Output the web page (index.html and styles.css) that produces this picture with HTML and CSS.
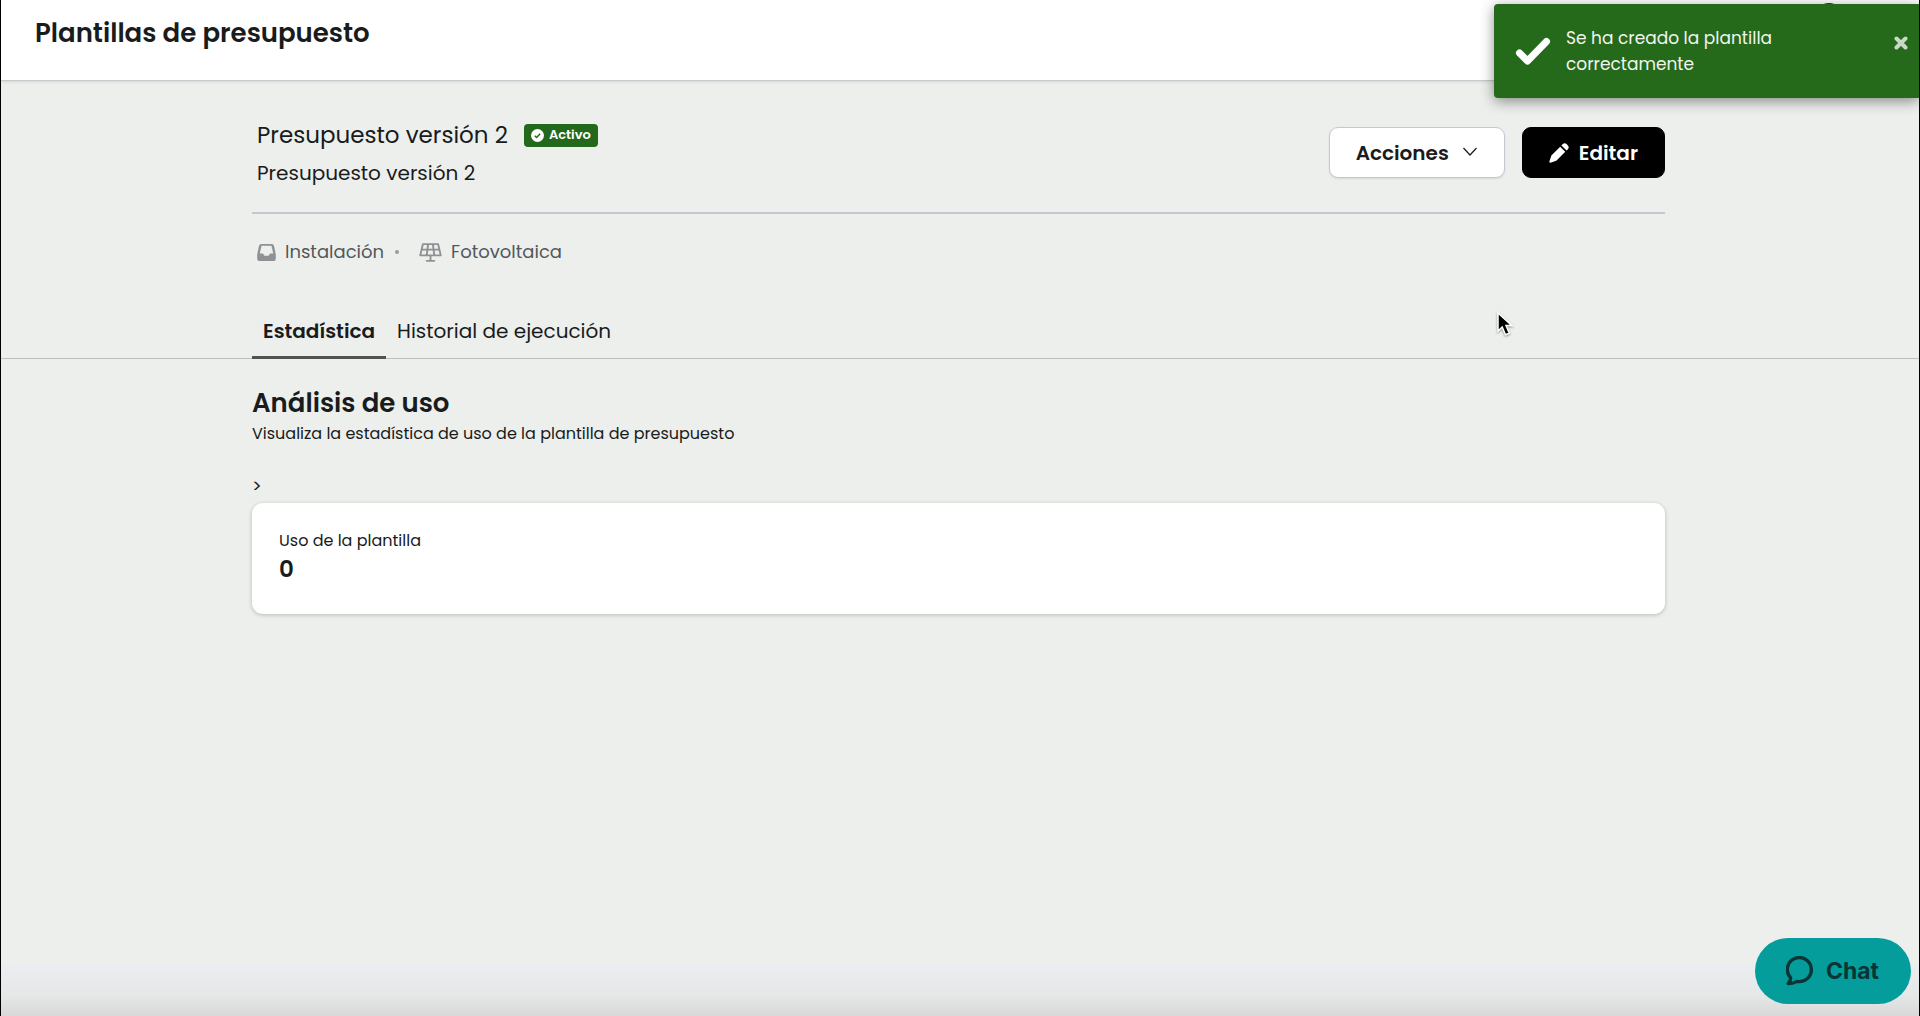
FILE: index.html
```html
<!DOCTYPE html>
<html lang="es">
<head>
<meta charset="utf-8">
<meta name="viewport" content="width=device-width, initial-scale=1">
<title>Plantillas de presupuesto</title>
<link rel="stylesheet" href="styles.css">
</head>
<body>
<div class="app">
  <header class="topbar">
    <h1 class="topbar-title">Plantillas de presupuesto</h1>
    <span class="avatar" aria-hidden="true"></span>
  </header>

  <main class="content">
    <div class="container">
      <section class="summary">
        <div class="summary-text">
          <div class="name-row">
            <h2 class="name">Presupuesto versión 2</h2>
            <span class="badge">
              <svg class="badge-icon" viewBox="0 0 16 16" aria-hidden="true"><circle cx="8" cy="8" r="8" fill="#fff"/><path d="M4.600 8.300l2.300 2.200 4.400-4.700" fill="none" stroke="#23681b" stroke-width="1.800"/></svg>
              Activo
            </span>
          </div>
          <p class="description">Presupuesto versión 2</p>
        </div>
        <div class="actions">
          <button class="button button-light" type="button">Acciones
            <svg class="chevron" viewBox="0 0 16 16" aria-hidden="true"><path d="M1.500 3L8 10l6.500-7" fill="none" stroke="currentColor" stroke-width="1.200"/></svg>
          </button>
          <button class="button button-dark" type="button">
            <svg class="pencil" viewBox="0 0 22 22" aria-hidden="true"><path d="M12.300 4.100l5.600 5.600L8 19.600l-6.400 2c-.8.200-1.400-.4-1.200-1.200l2.200-6.600zM13.700 2.700l1.500-1.500c1.200-1.200 2.900-1.200 4.100 0l1.500 1.500c1.200 1.200 1.200 2.900 0 4.100l-1.500 1.500z" fill="currentColor"/></svg>
            Editar
          </button>
        </div>
      </section>

      <ul class="meta">
        <li class="meta-item">
          <svg class="meta-icon" viewBox="0 0 20 20" aria-hidden="true"><path fill-rule="evenodd" d="M4.500 1h11a2.500 2.500 0 0 1 2.400 2l1.900 9v4a3 3 0 0 1-3 3H3.200a3 3 0 0 1-3-3v-4l1.900-9a2.500 2.500 0 0 1 2.400-2zm.3 2L2.900 11h3.300l1.700 2.500h4.200l1.700-2.500h3.300L15.200 3z" fill="currentColor"/></svg>
          Instalación
        </li>
        <li class="meta-item meta-item-next">
          <svg class="meta-icon-wide" viewBox="0 0 24 20" aria-hidden="true"><path d="M4 1.200h16L22.800 13H1.200zM2.500 7h19M9.500 1.200L8 13M14.500 1.200L16 13M12 13v5M8 18.800h8" fill="none" stroke="currentColor" stroke-width="2" stroke-linejoin="round" stroke-linecap="round"/></svg>
          Fotovoltaica
        </li>
      </ul>
    </div>

    <nav class="tabs">
      <div class="container tab-list">
        <a class="tab tab-active" href="#estadistica" aria-current="page">Estadística</a>
        <a class="tab" href="#historial">Historial de ejecución</a>
      </div>
    </nav>

    <section class="container usage" id="estadistica">
      <h2 class="usage-title">Análisis de uso</h2>
      <p class="usage-note">Visualiza la estadística de uso de la plantilla de presupuesto</p>
      <p class="marker">&gt;</p>
      <dl class="card">
        <dt class="card-label">Uso de la plantilla</dt>
        <dd class="card-value">0</dd>
      </dl>
    </section>
  </main>

  <div class="fade"></div>

  <div class="toast" role="status">
    <svg class="toast-icon" viewBox="0 0 36 28" aria-hidden="true"><path d="M4.500 16l8 8L31.500 4.500" fill="none" stroke="#fff" stroke-width="7" stroke-linecap="round" stroke-linejoin="round"/></svg>
    <p class="toast-text">Se ha creado la plantilla correctamente</p>
    <button class="toast-close" type="button" aria-label="Cerrar">
      <svg class="close-icon" viewBox="0 0 14 14" aria-hidden="true"><path d="M2.500 2.500l9 9M11.500 2.500l-9 9" stroke="#c8dac6" stroke-width="4" stroke-linecap="round"/></svg>
    </button>
  </div>

  <button class="chat" type="button">
    <svg class="chat-icon" viewBox="0 0 28 30" aria-hidden="true"><path d="M2.200 27.500c2-2 2.500-4 2.400-5.600A12 12 0 1 1 11 25.400c-2.500 1.500-5.500 2.300-8.800 2.100z" fill="none" stroke="currentColor" stroke-width="3.400" stroke-linejoin="round"/></svg>
    Chat
  </button>

  <svg class="pointer" viewBox="0 0 18 26" aria-hidden="true"><path d="M2 2v18l4.200-4 3.300 7.800 3.800-1.600-3.300-7.600h6z" fill="#000" stroke="#fff" stroke-width="1.500"/></svg>
</div>
</body>
</html>
```
FILE: styles.css
```css
* {
  box-sizing: border-box;
}

body {
  margin: 0;
  background: #ecefec;
  color: #191b1c;
  font-family: Poppins, Inter, sans-serif;
  font-size: 20px;
  line-height: 30px;
}

h1, h2, p, ul, dl, dd {
  margin: 0;
  padding: 0;
}

button {
  font: inherit;
  cursor: pointer;
}

.app {
  position: relative;
  min-height: 100vh;
  border: solid #000;
  border-width: 0 1px;
}

.topbar {
  display: flex;
  justify-content: space-between;
  align-items: flex-start;
  height: 81px;
  padding: 3px 76px 0 34px;
  background: #fff;
  border-bottom: 1px solid #c6c8cb;
  box-shadow: 0 1px 3px #0000001a;
}

.topbar-title {
  padding-top: 12px;
  font-size: 26px;
  line-height: 36px;
  font-weight: 600;
}

.avatar {
  width: 28px;
  height: 28px;
  border-radius: 50%;
  background: #333;
}

.container {
  --gutter: max(16px, calc((100% - 1416px) / 2));
  padding: 0 calc(var(--gutter) + 3px) 0 var(--gutter);
}

.summary {
  display: flex;
  justify-content: space-between;
  align-items: flex-start;
  padding: 36px 0 24px;
  border-bottom: 2px solid #c5c8d2;
}

.summary-text {
  padding-left: 5px;
}

.name-row {
  display: flex;
  align-items: center;
  gap: 16px;
}

.name {
  font-size: 23px;
  line-height: 36px;
  font-weight: 400;
}

.badge {
  display: flex;
  align-items: center;
  gap: 5px;
  height: 23px;
  padding: 0 7px;
  border-radius: 4px;
  background: #23681b;
  color: #fff;
  font-size: 13px;
  line-height: 20px;
  font-weight: 600;
}

.badge-icon {
  width: 13px;
  height: 13px;
}

.description {
  padding-top: 5px;
}

.actions {
  display: flex;
  gap: 17px;
  padding-top: 10px;
}

.button {
  display: flex;
  align-items: center;
  height: 51px;
  padding: 0 26px;
  border: 1px solid #c5c8d2;
  border-radius: 9px;
  font-weight: 600;
}

.button-light {
  gap: 13px;
  background: #fff;
  color: #191b1c;
  box-shadow: 0 1px 2px #0000001a;
}

.button-dark {
  gap: 10px;
  border-color: #000;
  background: #000;
  color: #fff;
}

.chevron {
  width: 16px;
  height: 16px;
}

.pencil {
  width: 20px;
  height: 20px;
}

.meta {
  display: flex;
  gap: 11px;
  padding: 23px 5px 0;
  color: #54575b;
  font-size: 18px;
  list-style: none;
}

.meta-item {
  display: flex;
  align-items: center;
  gap: 9px;
}

.meta-item-next::before {
  content: "";
  width: 4px;
  height: 4px;
  margin-right: 11px;
  border-radius: 50%;
  background: #999ba0;
}

.meta-icon {
  width: 19px;
  height: 19px;
  color: #8f9195;
}

.meta-icon-wide {
  width: 23px;
  height: 19px;
  color: #8f9195;
}

.tabs {
  margin-top: 49px;
  border-bottom: 1px solid #bcbebe;
}

.tab-list {
  display: flex;
}

.tab {
  height: 43px;
  padding: 0 11px;
  margin-bottom: -1px;
  border-bottom: 3px solid transparent;
  color: inherit;
  text-decoration: none;
}

.tab-active {
  border-color: #505254;
  font-weight: 600;
}

.usage {
  padding-top: 26px;
}

.usage-title {
  font-size: 26px;
  line-height: 36px;
  font-weight: 600;
}

.usage-note {
  font-size: 16px;
  line-height: 26px;
}

.marker {
  padding-top: 26px;
  font-size: 18px;
  line-height: 26px;
}

.card {
  margin-top: 4px;
  padding: 25px 27px 30px;
  border-radius: 11px;
  background: #fff;
  box-shadow: 0 1px 4px #00000038;
}

.card-label {
  font-size: 16px;
  line-height: 26px;
}

.card-value {
  font-size: 23px;
  line-height: 30px;
  font-weight: 600;
}

.fade {
  position: absolute;
  inset: auto 0 0;
  height: 52px;
  background: linear-gradient(#ecedf0, #e6e7e7 60%, #d8d8d8);
}

.toast {
  position: absolute;
  top: 4px;
  right: 0;
  display: flex;
  align-items: center;
  width: 425px;
  height: 94px;
  padding: 0 11px 0 21px;
  border-radius: 4px 0 0 4px;
  background: #25691b;
  box-shadow: 0 3px 14px #00000070;
  color: #f0f5ef;
  font-size: 17px;
  line-height: 26px;
}

.toast-icon {
  width: 36px;
  height: 28px;
}

.toast-text {
  width: 230px;
  margin: 0 auto 0 15px;
}

.toast-close {
  align-self: flex-start;
  padding: 32px 0 0;
  border: 0;
  background: none;
  line-height: 1;
}

.close-icon {
  display: block;
  width: 14px;
  height: 14px;
}

.chat {
  position: absolute;
  right: 8px;
  bottom: 12px;
  display: flex;
  align-items: center;
  gap: 12px;
  height: 66px;
  padding: 0 32px 0 31px;
  border: 0;
  border-radius: 33px;
  background: #049d9c;
  color: #0b3435;
  font-family: Inter, sans-serif;
  font-size: 23px;
  font-weight: 700;
}

.chat-icon {
  width: 28px;
  height: 30px;
}

.pointer {
  position: absolute;
  top: 311px;
  left: 1495px;
  width: 18px;
  height: 26px;
  filter: drop-shadow(0 1px 1px #00000066);
}
```
